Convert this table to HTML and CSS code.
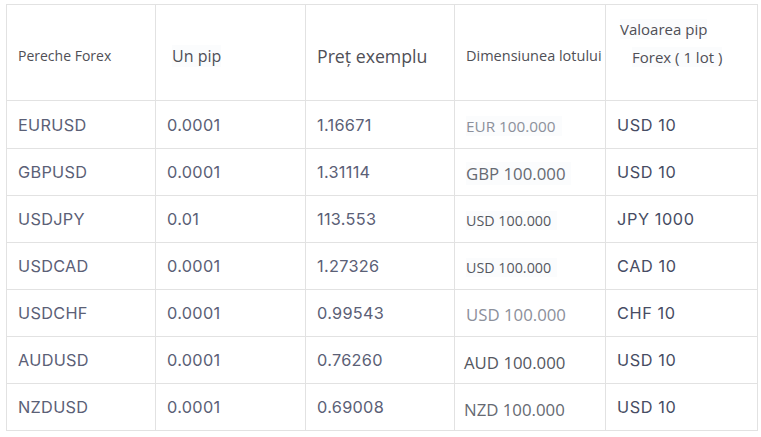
FILE: index.html
```html
<!DOCTYPE html>
<html lang="ro">
<head>
<meta charset="utf-8">
<title>Forex pip</title>
<link rel="stylesheet" href="styles.css">
</head>
<body>
<table class="fx">
  <colgroup>
    <col class="c1"><col class="c2"><col class="c3"><col class="c4"><col class="c5">
  </colgroup>
  <thead>
    <tr class="head">
      <th class="h-pair">Pereche Forex</th>
      <th class="h-pip"><span class="hl">Un pip</span></th>
      <th class="h-price">Preț exemplu</th>
      <th class="h-lot">Dimensiunea lotului</th>
      <th class="h-val"><span class="hl v1">Valoarea pip</span><br><span class="hl v2">Forex ( 1 lot )</span></th>
    </tr>
  </thead>
  <tbody>
    <tr><td>EURUSD</td><td>0.0001</td><td>1.16671</td><td><span class="lot md light hl">EUR 100.000</span></td><td class="val">USD 10</td></tr>
    <tr><td>GBPUSD</td><td>0.0001</td><td>1.31114</td><td><span class="lot lg mid hl">GBP 100.000</span></td><td class="val">USD 10</td></tr>
    <tr><td>USDJPY</td><td>0.01</td><td>113.553</td><td><span class="lot sm dark hl">USD 100.000</span></td><td class="val">JPY 1000</td></tr>
    <tr><td>USDCAD</td><td>0.0001</td><td>1.27326</td><td><span class="lot sm dark hl">USD 100.000</span></td><td class="val">CAD 10</td></tr>
    <tr><td>USDCHF</td><td>0.0001</td><td>0.99543</td><td><span class="lot lg light">USD 100.000</span></td><td class="val">CHF 10</td></tr>
    <tr><td>AUDUSD</td><td>0.0001</td><td>0.76260</td><td><span class="lot lg dark down">AUD 100.000</span></td><td class="val">USD 10</td></tr>
    <tr><td>NZDUSD</td><td>0.0001</td><td>0.69008</td><td><span class="lot lg mid down">NZD 100.000</span></td><td class="val">USD 10</td></tr>
  </tbody>
</table>
</body>
</html>
```

FILE: styles.css
```css
html, body {
  background: #ffffff;
}
body {
  margin: 4px 0 0 6px;
}
.fx {
  border-collapse: collapse;
  width: 751px;
  table-layout: fixed;
  border: 1px solid #dedede;
  font-family: Inter, "Open Sans", sans-serif;
  color: #5a5f74;
}
.c1 { width: 149px; }
.c2 { width: 150px; }
.c3 { width: 149px; }
.c4 { width: 151px; }
.c5 { width: 152px; }
.fx th, .fx td {
  border: 1px solid #e2e2e2;
  text-align: left;
  vertical-align: middle;
  padding: 0 0 0 11px;
}
.head th {
  height: 89px;
  font-family: "Open Sans", sans-serif;
  font-weight: 400;
  color: #4f4f56;
}
.h-pair, .h-pip, .h-price, .h-lot {
  padding-top: 6px !important;
}
.h-pair { font-size: 14px; }
.h-pip { font-size: 16px; padding-left: 16px !important; }
.h-price { font-size: 17.7px; }
.h-lot { font-size: 14.5px; }
.h-val {
  font-size: 15px;
  line-height: 27px;
  padding-left: 14px !important;
}
.h-val .v1 { position: relative; top: -10px; }
.h-val .v2 { position: relative; top: -9px; margin-left: 12px; }
.hl {
  background: #fbfcfd;
}
.fx tbody td {
  height: 46px;
  font-size: 16.3px;
  letter-spacing: 0.3px;
  color: #5b6076;
}
.fx tbody tr:first-child td { height: 47px; }
.fx td.val {
  color: #474c63;
  font-weight: 400;
  letter-spacing: 0.6px;
}
.lot {
  font-family: "Open Sans", sans-serif;
  letter-spacing: 0;
  display: inline-block;
  padding-right: 6px;
}
.lot.sm { font-size: 14.3px; margin-top: 3px; }
.lot.md { font-size: 15.3px; margin-top: 3px; }
.lot.lg { font-size: 16.8px; margin-top: 2px; }
.lot.light { color: #8c909b; }
.lot.mid { color: #666a72; }
.lot.dark { color: #55585f; }
.lot.down { margin-top: 5px; margin-left: -2px; }
```
